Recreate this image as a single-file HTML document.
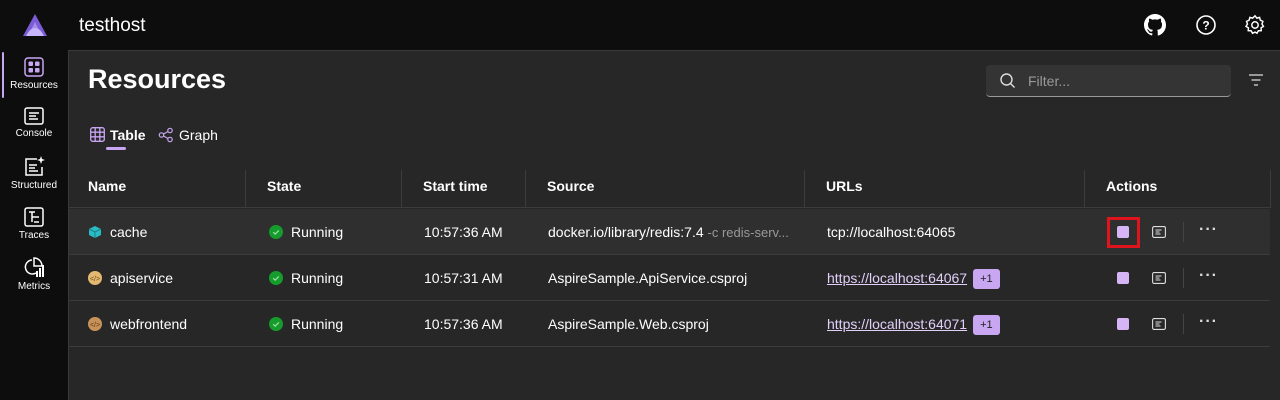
<!DOCTYPE html>
<html><head><style>
*{margin:0;padding:0;box-sizing:border-box}
body{width:1280px;height:400px;background:#0d0d0d;font-family:"Liberation Sans",sans-serif;color:#fff;position:relative;overflow:hidden;font-size:14px}
.abs{position:absolute}
.main{left:68px;top:50px;width:1212px;height:350px;background:#272727;border-top:1px solid #3a3a3a;border-left:1px solid #3a3a3a}
.nav{left:0;width:68px;text-align:center;font-size:10px;color:#fff}
.nav svg{display:block;margin:0 auto 3px}
.row{left:69px;width:1201px;height:46px;border-bottom:1px solid #3c3c3c}
.cell{position:absolute;top:0;line-height:46px;white-space:nowrap;font-size:14px}
.hd{font-weight:bold}
.sep{position:absolute;top:0;width:1px;height:38px;background:#3c3c3c}
.dot{display:inline-block;width:14px;height:14px;vertical-align:-2px;margin-right:8px}
.stop{position:absolute;width:11px;height:11px;background:#d6b5f7;border-radius:2px}
.tag{display:inline-block;background:#c8a6f2;color:#222;font-size:11px;line-height:20px;padding:0 7px;border-radius:3px;margin-left:6px;vertical-align:1px}
a{color:#e2cffa;text-decoration:underline}
.dots{font-size:16px;font-weight:bold;letter-spacing:1px;color:#ddd}
</style></head><body>
<svg class="abs" style="left:22px;top:13px" width="26" height="24" viewBox="0 0 26 24"><path d="M13 1 L25 23 H1 Z" fill="#7b5cd6"/><path d="M13 9 L20 23 H6 Z" fill="#a58bf0"/><path d="M4 23 Q8 15 13 15 Q18 15 22 23Z" fill="#c7b5fb"/></svg>
<div class="abs" style="left:79px;top:15px;font-size:19px">testhost</div>
<svg class="abs" style="left:1144px;top:14px" width="22" height="22" viewBox="0 0 16 16"><path fill="#fff" d="M8 0C3.58 0 0 3.58 0 8c0 3.54 2.290 6.530 5.470 7.590.4.07.55-.17.55-.38v-1.33c-2.23.48-2.7-1.07-2.7-1.07-.36-.92-.89-1.170-.89-1.170-.73-.5.06-.49.06-.49.8.06 1.23.83 1.23.83.71 1.22 1.87.87 2.33.66.07-.52.28-.87.5-1.07-1.78-.2-3.64-.89-3.64-3.95 0-.87.31-1.59.82-2.15-.08-.2-.36-1.02.08-2.12 0 0 .67-.21 2.2.82a7.6 7.6 0 0 1 4 0c1.53-1.04 2.2-.82 2.2-.82.44 1.1.16 1.92.08 2.12.51.56.82 1.27.82 2.15 0 3.07-1.87 3.75-3.65 3.95.29.25.54.73.54 1.48v2.2c0 .21.15.46.55.38A8 8 0 0 0 16 8c0-4.42-3.58-8-8-8z"/></svg>
<svg class="abs" style="left:1195px;top:14px" width="22" height="22" viewBox="0 0 22 22"><circle cx="11" cy="11" r="9" fill="none" stroke="#fff" stroke-width="1.6"/><text x="11" y="15.5" font-size="12" font-weight="bold" text-anchor="middle" fill="#fff" font-family="Liberation Sans">?</text></svg>
<svg class="abs" style="left:1244px;top:14px" width="22" height="22" viewBox="0 0 24 24"><path fill="none" stroke="#fff" stroke-width="1.6" d="M12 2l2 2.5 3-.8.8 3 2.8 1.3-1 2.9 1.6 2.6-2.6 1.6.2 3.1-3.1.1-1.6 2.7L12 19.7 9.3 21l-1.6-2.7-3.1-.1.2-3.1L2.2 13.5l1.6-2.6-1-2.9L5.6 6.7l.8-3 3 .8z"/><circle cx="12" cy="12" r="3.5" fill="none" stroke="#fff" stroke-width="1.6"/></svg>
<div class="abs" style="left:2px;top:52px;width:2px;height:46px;background:#c8a6f2;border-radius:1px"></div>
<div class="abs nav" style="top:57px"><svg width="20" height="20" viewBox="0 0 20 20"><rect x="1" y="1" width="18" height="18" rx="3" fill="none" stroke="#c8a6f2" stroke-width="1.5"/><rect x="4.5" y="4.5" width="4.5" height="4.5" rx="1" fill="#c8a6f2"/><rect x="11" y="4.5" width="4.5" height="4.5" rx="1" fill="#c8a6f2"/><rect x="4.5" y="11" width="4.5" height="4.5" rx="1" fill="#c8a6f2"/><rect x="11" y="11" width="4.5" height="4.5" rx="1" fill="#c8a6f2"/></svg>Resources</div>
<div class="abs nav" style="top:107px"><svg width="20" height="18" viewBox="0 0 20 18"><rect x="1" y="1" width="18" height="16" rx="2" fill="none" stroke="#fff" stroke-width="1.5"/><path d="M5 6h10M5 9h7M5 12h9" stroke="#fff" stroke-width="1.5"/></svg>Console</div>
<div class="abs nav" style="top:155px"><svg width="22" height="22" viewBox="0 0 22 22"><path d="M14 4H3v16h16v-8" fill="none" stroke="#fff" stroke-width="1.5"/><path d="M6 10h8M6 13h6M6 16h9" stroke="#fff" stroke-width="1.5"/><path d="M18 1l1 3 3 1-3 1-1 3-1-3-3-1 3-1z" fill="#fff"/></svg>Structured</div>
<div class="abs nav" style="top:207px"><svg width="20" height="20" viewBox="0 0 20 20"><rect x="1" y="1" width="18" height="18" rx="2" fill="none" stroke="#fff" stroke-width="1.5"/><path d="M5 5h6M8 10h7M10 15h5M8 5v10" stroke="#fff" stroke-width="1.5"/></svg>Traces</div>
<div class="abs nav" style="top:256px"><svg width="22" height="22" viewBox="0 0 22 22"><path d="M9 4a7 7 0 1 0 4 13" fill="none" stroke="#fff" stroke-width="1.5"/><path d="M11 2v8h8a8 8 0 0 0-8-8z" fill="none" stroke="#fff" stroke-width="1.5"/><rect x="13" y="15" width="2" height="6" fill="#fff"/><rect x="16" y="12" width="2" height="9" fill="#fff"/><rect x="19" y="9" width="2" height="12" fill="#fff"/></svg>Metrics</div>
<div class="abs main"></div>
<div class="abs" style="left:88px;top:64px;font-size:27px;font-weight:bold">Resources</div>
<div class="abs" style="left:986px;top:65px;width:245px;height:32px;background:#343434;border-radius:4px;border-bottom:1px solid #9a9a9a"></div>
<svg class="abs" style="left:999px;top:72px" width="18" height="18" viewBox="0 0 18 18"><circle cx="7.5" cy="7.5" r="5.5" fill="none" stroke="#ddd" stroke-width="1.4"/><path d="M11.5 11.5l4 4" stroke="#ddd" stroke-width="1.4"/></svg>
<div class="abs" style="left:1028px;top:73px;color:#999;font-size:14px">Filter...</div>
<svg class="abs" style="left:1248px;top:74px" width="16" height="12" viewBox="0 0 16 12"><path d="M1 1h14M3.5 6h9M6 11h4" stroke="#ddd" stroke-width="1.3"/></svg>
<svg class="abs" style="left:90px;top:127px" width="15" height="15" viewBox="0 0 15 15"><rect x=".7" y=".7" width="13.6" height="13.6" rx="2" fill="none" stroke="#c8a6f2" stroke-width="1.3"/><path d="M5.2 1v13M9.8 1v13M1 5.2h13M1 9.8h13" stroke="#c8a6f2" stroke-width="1.3"/></svg>
<div class="abs" style="left:110px;top:127px;font-weight:bold">Table</div>
<div class="abs" style="left:106px;top:147px;width:20px;height:3px;background:#c8a6f2;border-radius:2px"></div>
<svg class="abs" style="left:158px;top:127px" width="16" height="16" viewBox="0 0 16 16"><circle cx="3.5" cy="8" r="2.2" fill="none" stroke="#c8a6f2" stroke-width="1.2"/><circle cx="12" cy="3.5" r="2.2" fill="none" stroke="#c8a6f2" stroke-width="1.2"/><circle cx="12" cy="12.5" r="2.2" fill="none" stroke="#c8a6f2" stroke-width="1.2"/><path d="M5.5 7l4.5-2.5M5.5 9l4.5 2.5" stroke="#c8a6f2" stroke-width="1.2"/></svg>
<div class="abs" style="left:179px;top:127px">Graph</div>
<div class="abs row" style="top:170px;height:38px;border-bottom:1px solid #3c3c3c">
<div class="cell hd" style="left:19px;line-height:33px">Name</div>
<div class="sep" style="left:176px"></div><div class="cell hd" style="left:198px;line-height:33px">State</div>
<div class="sep" style="left:332px"></div><div class="cell hd" style="left:354px;line-height:33px">Start time</div>
<div class="sep" style="left:456px"></div><div class="cell hd" style="left:478px;line-height:33px">Source</div>
<div class="sep" style="left:735px"></div><div class="cell hd" style="left:757px;line-height:33px">URLs</div>
<div class="sep" style="left:1015px"></div><div class="cell hd" style="left:1037px;line-height:33px">Actions</div>
<div class="sep" style="left:1201px"></div>
</div>
<div class="abs row" style="top:209px;background:#2f2f2f">
<svg class="cell" style="left:19px;top:16px" width="14" height="14" viewBox="0 0 14 14"><path d="M7 1l6 3v6l-6 3-6-3V4z" fill="#2bbbc4"/><path d="M1 4l6 3 6-3M7 7v6" stroke="#1a7f86" stroke-width="1" fill="none"/></svg>
<div class="cell" style="left:41px">cache</div>
<div class="cell" style="left:200px"><svg class="dot" viewBox="0 0 14 14"><circle cx="7" cy="7" r="7" fill="#159c2c"/><path d="M4.2 7.2l2 2 3.6-3.8" stroke="#9fe0a8" stroke-width="1.2" fill="none"/></svg>Running</div>
<div class="cell" style="left:355px">10:57:36 AM</div>
<div class="cell" style="left:479px">docker.io/library/redis:7.4 <span style="color:#999;font-size:13px">-c redis-serv...</span></div>
<div class="cell" style="left:758px">tcp://localhost:64065</div>
</div>
<div class="abs row" style="top:255px">
<svg class="cell" style="left:19px;top:16px" width="14" height="14"><circle cx="7" cy="7" r="7" fill="#e3b870"/><text x="7" y="10" font-size="7" text-anchor="middle" fill="#6a4a10" font-family="Liberation Sans">&lt;/&gt;</text></svg>
<div class="cell" style="left:41px">apiservice</div>
<div class="cell" style="left:200px"><svg class="dot" viewBox="0 0 14 14"><circle cx="7" cy="7" r="7" fill="#159c2c"/><path d="M4.2 7.2l2 2 3.6-3.8" stroke="#9fe0a8" stroke-width="1.2" fill="none"/></svg>Running</div>
<div class="cell" style="left:355px">10:57:31 AM</div>
<div class="cell" style="left:479px">AspireSample.ApiService.csproj</div>
<div class="cell" style="left:758px"><a>https://localhost:64067</a><span class="tag">+1</span></div>
</div>
<div class="abs row" style="top:301px">
<svg class="cell" style="left:19px;top:16px" width="14" height="14"><circle cx="7" cy="7" r="7" fill="#c7925a"/><text x="7" y="10" font-size="7" text-anchor="middle" fill="#5a3a10" font-family="Liberation Sans">&lt;/&gt;</text></svg>
<div class="cell" style="left:41px">webfrontend</div>
<div class="cell" style="left:200px"><svg class="dot" viewBox="0 0 14 14"><circle cx="7" cy="7" r="7" fill="#159c2c"/><path d="M4.2 7.2l2 2 3.6-3.8" stroke="#9fe0a8" stroke-width="1.2" fill="none"/></svg>Running</div>
<div class="cell" style="left:355px">10:57:36 AM</div>
<div class="cell" style="left:479px">AspireSample.Web.csproj</div>
<div class="cell" style="left:758px"><a>https://localhost:64071</a><span class="tag">+1</span></div>
</div>
<div class="abs" style="left:1107px;top:217px;width:33px;height:31px;border:3px solid #e0141c"></div>
<div class="stop" style="left:1117px;top:226px;width:12px;height:12px"></div>
<div class="stop" style="left:1117px;top:272px;width:12px;height:12px"></div>
<div class="stop" style="left:1117px;top:318px;width:12px;height:12px"></div>
<svg class="abs" style="left:1152px;top:226px" width="14" height="12" viewBox="0 0 14 12"><rect x=".6" y=".6" width="12.8" height="10.8" rx="1.5" fill="none" stroke="#ddd" stroke-width="1.1"/><path d="M3.5 4h6M3.5 6h4M3.5 8h5" stroke="#ddd" stroke-width="1"/></svg>
<svg class="abs" style="left:1152px;top:272px" width="14" height="12" viewBox="0 0 14 12"><rect x=".6" y=".6" width="12.8" height="10.8" rx="1.5" fill="none" stroke="#ddd" stroke-width="1.1"/><path d="M3.5 4h6M3.5 6h4M3.5 8h5" stroke="#ddd" stroke-width="1"/></svg>
<svg class="abs" style="left:1152px;top:318px" width="14" height="12" viewBox="0 0 14 12"><rect x=".6" y=".6" width="12.8" height="10.8" rx="1.5" fill="none" stroke="#ddd" stroke-width="1.1"/><path d="M3.5 4h6M3.5 6h4M3.5 8h5" stroke="#ddd" stroke-width="1"/></svg>
<div class="abs" style="left:1183px;top:222px;width:1px;height:20px;background:#444"></div>
<div class="abs" style="left:1183px;top:268px;width:1px;height:20px;background:#444"></div>
<div class="abs" style="left:1183px;top:314px;width:1px;height:20px;background:#444"></div>
<div class="abs dots" style="left:1199px;top:221px">···</div>
<div class="abs dots" style="left:1199px;top:267px">···</div>
<div class="abs dots" style="left:1199px;top:313px">···</div>
</body></html>
